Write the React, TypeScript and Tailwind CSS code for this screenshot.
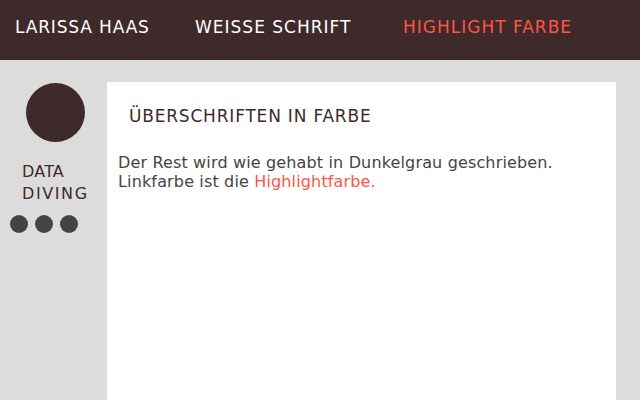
import React from "react";

export default function App() {
  return (
    <div className="w-[640px] h-[400px] overflow-hidden bg-[#dcdcdc] flex flex-col font-['DejaVu_Sans',Verdana,sans-serif]">
      <header className="h-[60px] shrink-0 bg-[#3e2a2a] flex items-start pt-[16px] text-[17px] leading-[22px] tracking-[1px]">
        <span className="ml-[15px] w-[180px] tracking-[0.85px] text-white">LARISSA HAAS</span>
        <span className="w-[208px] text-white">WEISSE SCHRIFT</span>
        <span className="text-[#ff5544]">HIGHLIGHT FARBE</span>
      </header>
      <div className="flex flex-1">
        <aside className="w-[107px] shrink-0 flex flex-col">
          <div className="ml-[26px] mt-[23px] w-[59px] h-[59px] rounded-full bg-[#3e2a2a]" />
          <div className="ml-[22px] mt-[19px] text-[16px] leading-[22px] text-[#3e2a2a]">
            <div className="tracking-[0.2px]">DATA</div>
            <div className="tracking-[1.6px]">DIVING</div>
          </div>
          <div className="ml-[10px] mt-[10px] flex gap-[7px]">
            <span className="w-[18px] h-[18px] rounded-full bg-[#444444]" />
            <span className="w-[18px] h-[18px] rounded-full bg-[#444444]" />
            <span className="w-[18px] h-[18px] rounded-full bg-[#444444]" />
          </div>
        </aside>
        <main className="flex-1 mr-[24px] mt-[22px] bg-white">
          <h1 className="ml-[22px] mt-[23px] text-[17px] leading-[22px] tracking-[0.8px] text-[#3e2a2a]">ÜBERSCHRIFTEN IN FARBE</h1>
          <p className="ml-[11px] mt-[26px] text-[16px] leading-[19px] tracking-[0.15px] text-[#444444]">
            Der Rest wird wie gehabt in Dunkelgrau geschrieben.<br />
            Linkfarbe ist die <span className="text-[#ff5544]">Highlightfarbe.</span>
          </p>
        </main>
      </div>
    </div>
  );
}
